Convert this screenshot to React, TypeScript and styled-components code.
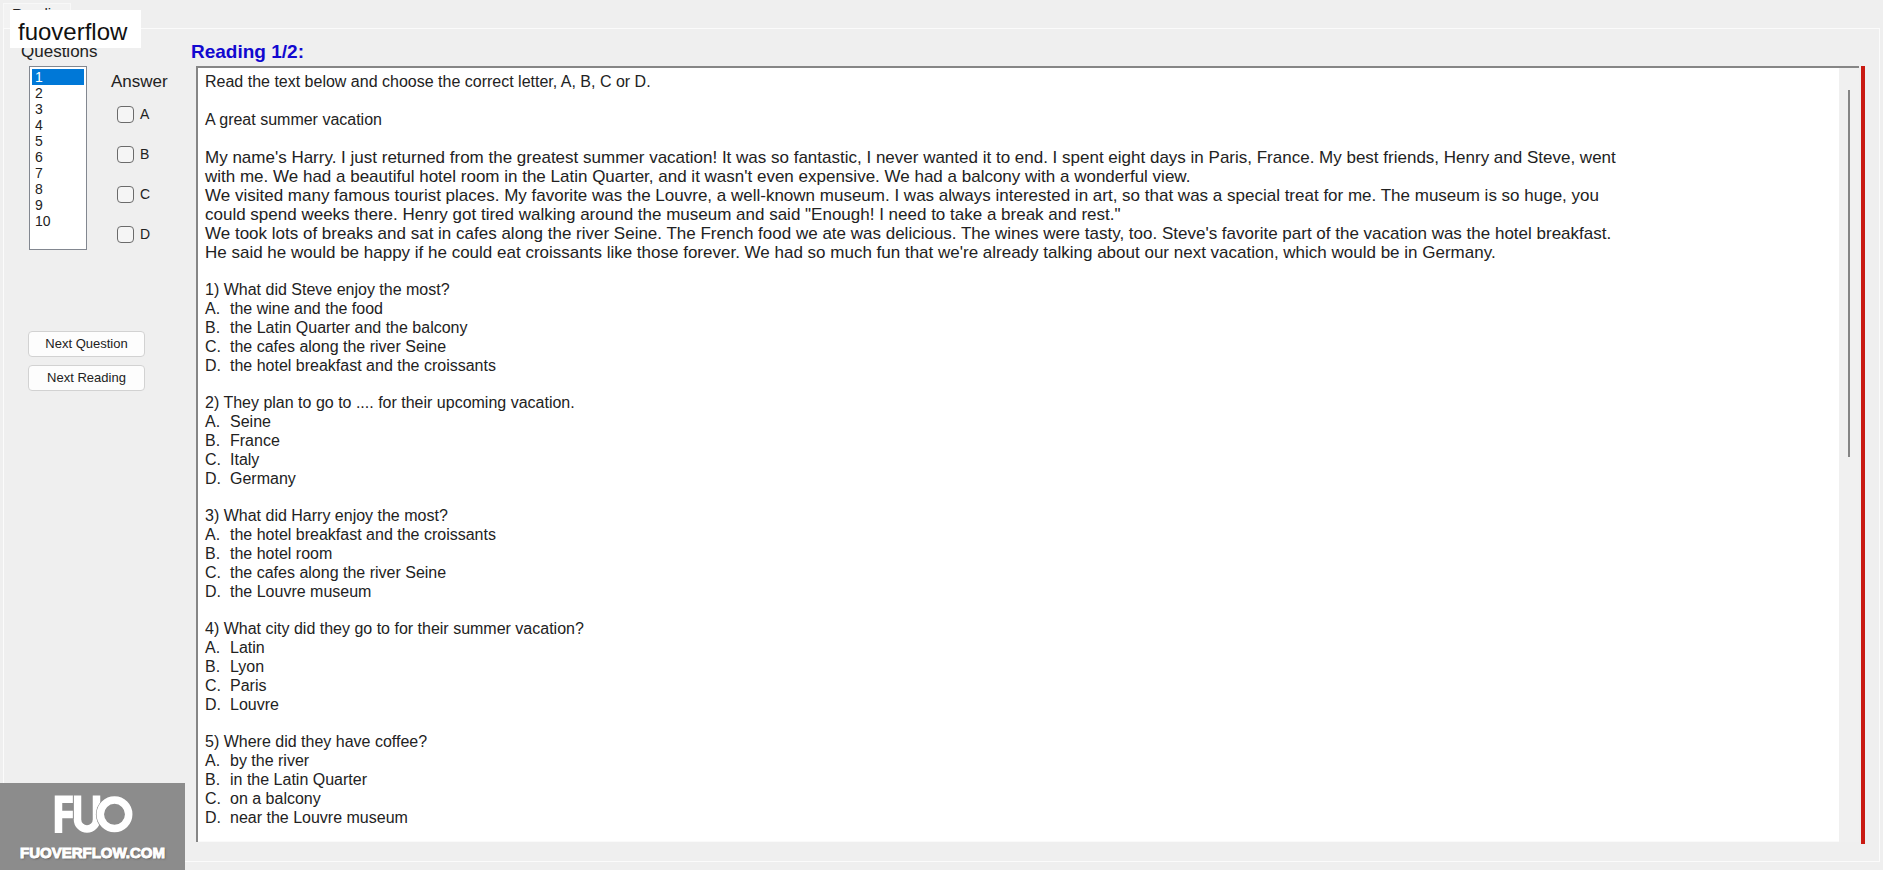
import React from "react";
import styled, { createGlobalStyle, css } from "styled-components";

const Global = createGlobalStyle`
  * { box-sizing: border-box; }
  body { margin: 0; background: #efefef; color: #222; font: 16px/19px "Liberation Sans", Arial, sans-serif; }
`;

const Window = styled.div`
  display: flex;
  flex-direction: column;
  min-height: 100vh;
  padding: 3px 3px 8px;
`;

const TabStrip = styled.nav`
  display: flex;
  height: 25px;
`;

const Tab = styled.button`
  display: flex;
  width: 68px;
  padding: 1px 0 0 8px;
  border: solid #f8f8f8;
  border-width: 1px 1px 0 1px;
  background: #f2f2f2;
  color: #222;
  font: 15px/17px "Liberation Sans", Arial, sans-serif;
  text-align: left;
`;

const Page = styled.main`
  display: flex;
  flex: 1;
  gap: 20px;
  padding: 13px 14px 19px 17px;
  border: 1px solid #fbfbfb;
`;

const Side = styled.aside`
  width: 155px;
  flex: none;
`;

const Heading = styled.h2<{ $accent?: boolean }>`
  display: block;
  margin: 0;
  font-size: 17px;
  line-height: 19px;
  font-weight: 400;
  ${(p) => p.$accent && css`
    padding-bottom: 5px;
    color: #1208d0;
    font-size: 19px;
    font-weight: 700;
  `}
`;

const Picker = styled.div`
  display: flex;
  gap: 24px;
  padding: 5px 0 0 8px;
`;

const NumberList = styled.select`
  width: 58px;
  height: 184px;
  padding: 2px;
  overflow: hidden;
  border: 1px solid #828790;
  border-radius: 0;
  outline: 0;
  background: #fff;
  font: 14px/16px "Liberation Sans", Arial, sans-serif;
  scrollbar-width: none;

  option {
    min-height: 16px;
    padding: 0 3px;
    color: #222;
  }

  option:checked {
    background: #0078d7 linear-gradient(#0078d7, #0078d7);
    color: #fff;
  }
`;

const Answers = styled.fieldset`
  min-width: 0;
  margin: 0;
  padding: 6px 0 0;
  border: 0;
`;

const AnswerTitle = styled.legend`
  float: left;
  padding: 0;
  font-size: 17px;
  line-height: 19px;
`;

const Choices = styled.div`
  display: flex;
  flex-direction: column;
  clear: both;
  gap: 21px;
  padding: 14px 0 0 6px;
`;

const Choice = styled.label`
  display: flex;
  align-items: center;
  gap: 6px;
  font-size: 14px;
`;

const Tick = styled.input`
  appearance: none;
  width: 17px;
  height: 17px;
  margin: 0;
  border: 1px solid #6b6b6b;
  border-radius: 4px;
  background: #f5f5f5;

  &:checked { background: #0078d7; }
`;

const Actions = styled.div`
  display: flex;
  flex-direction: column;
  gap: 8px;
  padding: 81px 0 0 7px;
`;

const Action = styled.button`
  width: 117px;
  height: 26px;
  padding: 0;
  border: 1px solid #d2d2d2;
  border-radius: 4px;
  background: #fdfdfd;
  color: #222;
  font: 13px/16px "Liberation Sans", Arial, sans-serif;
`;

const Content = styled.section`
  display: flex;
  flex: 1;
  flex-direction: column;
  min-width: 0;
`;

const Title = styled(Heading)`
  margin-left: -5px;
`;

const Viewer = styled.div`
  display: flex;
  flex: 1;
  gap: 2px;
`;

const Sheet = styled.article`
  display: flex;
  flex: 1;
  min-width: 0;
  border: solid #868686;
  border-width: 2px 0 0 2px;
  box-shadow: inset 0 -1px #fafafa;
  background: #fff;
`;

const Passage = styled.div`
  display: flex;
  flex: 1;
  flex-direction: column;
  gap: 18px;
  min-width: 0;
  padding: 4px 7px 8px;
`;

const Intro = styled.header`
  display: flex;
  flex-direction: column;
  gap: 19px;
`;

const Para = styled.p<{ $wide?: boolean }>`
  margin: 0;
  font-size: ${(p) => (p.$wide ? 17 : 16)}px;
  line-height: 19px;
  white-space: pre;
`;

const Options = styled.ol`
  margin: 0;
  padding: 0;
  list-style: none;
`;

const Option = styled.li`
  display: grid;
  grid-template-columns: 25px auto;
`;

const ScrollTrack = styled.div`
  display: flex;
  flex: none;
  justify-content: center;
  width: 20px;
  padding-top: 22px;
  background: #f0f0f0;
`;

const ScrollThumb = styled.div`
  width: 2px;
  height: 367px;
  background: #858585;
`;

const Marker = styled.div`
  width: 4px;
  margin-bottom: -2px;
  background: #c91a12;
`;

const NameTag = styled.div`
  position: absolute;
  top: 10px;
  left: 10px;
  width: 131px;
  padding: 9px 8px 3px;
  background: #fff;
  color: #111;
  font-size: 24px;
  line-height: 26px;
`;

const Brand = styled.div`
  position: fixed;
  bottom: 0;
  left: 0;
  display: flex;
  flex-direction: column;
  align-items: center;
  width: 185px;
  height: 87px;
  padding-top: 11px;
  background: #8c8c8c;
  color: #fff;
`;

const BrandName = styled.span`
  margin-top: 7px;
  font: 700 15px/24px "Liberation Sans", Arial, sans-serif;
  -webkit-text-stroke: 1px #fff;
  text-shadow: 1px 1px 2px #555;
`;

const story = [
  "My name's Harry. I just returned from the greatest summer vacation! It was so fantastic, I never wanted it to end. I spent eight days in Paris, France. My best friends, Henry and Steve, went",
  "with me. We had a beautiful hotel room in the Latin Quarter, and it wasn't even expensive. We had a balcony with a wonderful view.",
  "We visited many famous tourist places. My favorite was the Louvre, a well-known museum. I was always interested in art, so that was a special treat for me. The museum is so huge, you",
  "could spend weeks there. Henry got tired walking around the museum and said \"Enough! I need to take a break and rest.\"",
  "We took lots of breaks and sat in cafes along the river Seine. The French food we ate was delicious. The wines were tasty, too. Steve's favorite part of the vacation was the hotel breakfast.",
  "He said he would be happy if he could eat croissants like those forever. We had so much fun that we're already talking about our next vacation, which would be in Germany.",
].join("\n");

const letters = ["A", "B", "C", "D"];

const questions = [
  { text: "What did Steve enjoy the most?", options: ["the wine and the food", "the Latin Quarter and the balcony", "the cafes along the river Seine", "the hotel breakfast and the croissants"] },
  { text: "They plan to go to .... for their upcoming vacation.", options: ["Seine", "France", "Italy", "Germany"] },
  { text: "What did Harry enjoy the most?", options: ["the hotel breakfast and the croissants", "the hotel room", "the cafes along the river Seine", "the Louvre museum"] },
  { text: "What city did they go to for their summer vacation?", options: ["Latin", "Lyon", "Paris", "Louvre"] },
  { text: "Where did they have coffee?", options: ["by the river", "in the Latin Quarter", "on a balcony", "near the Louvre museum"] },
];

export default function App() {
  return (
    <>
      <Global />
      <Window>
        <TabStrip>
          <Tab type="button">Reading</Tab>
        </TabStrip>
        <Page>
          <Side>
            <Heading as="label" htmlFor="question-list">Questions</Heading>
            <Picker>
              <NumberList id="question-list" size={11} defaultValue="1">
                {Array.from({ length: 10 }, (_, i) => (
                  <option key={i} value={i + 1}>{i + 1}</option>
                ))}
              </NumberList>
              <Answers>
                <AnswerTitle>Answer</AnswerTitle>
                <Choices>
                  {letters.map((l) => (
                    <Choice key={l}>
                      <Tick type="checkbox" name={l} />
                      {l}
                    </Choice>
                  ))}
                </Choices>
              </Answers>
            </Picker>
            <Actions>
              <Action type="button">Next Question</Action>
              <Action type="button">Next Reading</Action>
            </Actions>
          </Side>
          <Content>
            <Title $accent>Reading 1/2:</Title>
            <Viewer>
              <Sheet>
                <Passage>
                  <Intro>
                    <Para>Read the text below and choose the correct letter, A, B, C or D.</Para>
                    <Para>A great summer vacation</Para>
                    <Para $wide>{story}</Para>
                  </Intro>
                  {questions.map((q, i) => (
                    <div key={q.text}>
                      <Para>{i + 1}) {q.text}</Para>
                      <Options>
                        {q.options.map((o, n) => (
                          <Option key={o}>
                            <span>{letters[n]}.</span>
                            <span>{o}</span>
                          </Option>
                        ))}
                      </Options>
                    </div>
                  ))}
                </Passage>
                <ScrollTrack>
                  <ScrollThumb />
                </ScrollTrack>
              </Sheet>
              <Marker />
            </Viewer>
          </Content>
        </Page>
      </Window>
      <NameTag>fuoverflow</NameTag>
      <Brand>
        <svg width="86" height="40" viewBox="0 0 86 40" fill="none" stroke="#fff" aria-label="FUO" role="img">
          <path d="M8.5 39V5.2H23M8.5 20.5H23" strokeWidth="7.5" />
          <path d="M27.5 1.5V25.5A9.5 9.5 0 0 0 46.5 25.5V1.5" strokeWidth="7.5" />
          <path d="M23.3 1.5V25" stroke="#8c8c8c" strokeWidth="0.7" />
          <circle cx="64.5" cy="20.3" r="18.6" fill="#8c8c8c" stroke="none" />
          <circle cx="64.5" cy="20.3" r="14.2" strokeWidth="7.5" />
        </svg>
        <BrandName>FUOVERFLOW.COM</BrandName>
      </Brand>
    </>
  );
}
